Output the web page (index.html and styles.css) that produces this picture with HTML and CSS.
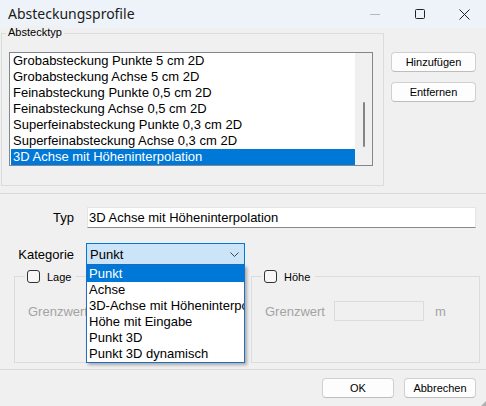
FILE: index.html
```html
<!DOCTYPE html>
<html lang="de">
<head>
<meta charset="utf-8">
<title>Absteckungsprofile</title>
<link rel="stylesheet" href="styles.css">
</head>
<body>
<div class="window">
  <header class="titlebar">
    <span class="title">Absteckungsprofile</span>
    <div class="controls">
      <span class="ctl"><svg width="10" height="10" viewBox="0 0 10 10"><line x1="0" y1="5.5" x2="10" y2="5.5" stroke="#b8b8b8" stroke-width="1"/></svg></span>
      <span class="ctl"><svg width="10" height="10" viewBox="0 0 10 10"><rect x="0.5" y="0.5" width="9" height="9" rx="1" fill="none" stroke="#222" stroke-width="1"/></svg></span>
      <span class="ctl"><svg width="11" height="11" viewBox="0 0 11 11"><path d="M0.5 0.5 L10.5 10.5 M10.5 0.5 L0.5 10.5" stroke="#222" stroke-width="1" fill="none"/></svg></span>
    </div>
  </header>

  <div class="top">
    <div class="group main-group">
      <span class="group-label">Abstecktyp</span>
      <div class="listbox">
        <ul class="items">
          <li>Grobabsteckung Punkte 5 cm 2D</li>
          <li>Grobabsteckung Achse 5 cm 2D</li>
          <li>Feinabsteckung Punkte 0,5 cm 2D</li>
          <li>Feinabsteckung Achse 0,5 cm 2D</li>
          <li>Superfeinabsteckung Punkte 0,3 cm 2D</li>
          <li>Superfeinabsteckung Achse 0,3 cm 2D</li>
          <li class="selected">3D Achse mit Höheninterpolation</li>
        </ul>
        <div class="scrollbar"><div class="thumb"></div></div>
      </div>
    </div>
    <div class="side-buttons">
      <button class="btn side-btn">Hinzufügen</button>
      <button class="btn side-btn">Entfernen</button>
    </div>
  </div>

  <div class="sep"></div>

  <div class="form">
    <span class="lbl">Typ</span>
    <div class="textbox">3D Achse mit Höheninterpolation</div>
    <span class="lbl">Kategorie</span>
    <div class="combo-wrap">
      <div class="combo">
        <span>Punkt</span>
        <svg class="chev" width="9" height="5" viewBox="0 0 9 5"><path d="M0.5 0.5 L4.5 4.5 L8.5 0.5" fill="none" stroke="#444" stroke-width="1"/></svg>
      </div>
      <ul class="dropdown">
        <li class="selected">Punkt</li>
        <li>Achse</li>
        <li>3D-Achse mit Höheninterpolation</li>
        <li>Höhe mit Eingabe</li>
        <li>Punkt 3D</li>
        <li>Punkt 3D dynamisch</li>
      </ul>
    </div>
  </div>

  <div class="options">
    <div class="group opt-group">
      <div class="opt-legend"><span class="cb"></span><span>Lage</span></div>
      <div class="limit-row">
        <span class="limit-lbl">Grenzwert</span>
        <span class="limit-input"></span>
        <span class="unit">m</span>
      </div>
    </div>
    <div class="group opt-group">
      <div class="opt-legend"><span class="cb"></span><span>Höhe</span></div>
      <div class="limit-row">
        <span class="limit-lbl">Grenzwert</span>
        <span class="limit-input"></span>
        <span class="unit">m</span>
      </div>
    </div>
  </div>

  <div class="sep footer-sep"></div>

  <div class="footer">
    <button class="btn foot-btn">OK</button>
    <button class="btn foot-btn">Abbrechen</button>
  </div>
  <span class="grip"></span>
</div>
</body>
</html>
```

FILE: styles.css
```css
* { box-sizing: border-box; }

html, body {
  margin: 0;
  padding: 0;
}

body {
  font-family: "Liberation Sans", Arial, sans-serif;
  font-size: 13px;
  color: #000;
  background: #f0f0f0;
}

.window {
  width: 486px;
  height: 406px;
  background: #f0f0f0;
  overflow: hidden;
  position: relative;
  display: flex;
  flex-direction: column;
}

/* title bar */
.titlebar {
  height: 28px;
  flex: none;
  background: #eef2f9;
  display: flex;
  align-items: center;
  padding-left: 8px;
}

.title {
  font-family: "Noto Sans", "Open Sans", sans-serif;
  font-size: 14px;
  color: #1a1a1a;
  margin-top: -1px;
}

.controls {
  margin-left: auto;
  margin-right: -1px;
  display: flex;
  height: 28px;
}

.ctl {
  width: 45px;
  height: 28px;
  display: flex;
  align-items: center;
  justify-content: center;
}

/* generic group box */
.group {
  border: 1px solid #dcdcdc;
}

/* top section */
.top {
  display: flex;
  align-items: flex-start;
  padding-top: 5px;
  flex: none;
}

.main-group {
  width: 383px;
  height: 153px;
  margin-left: 1px;
}

.group-label {
  display: block;
  width: max-content;
  font-size: 11px;
  line-height: 13px;
  margin: -8px 0 0 4px;
  padding: 0 2px;
  background: #f0f0f0;
}

.listbox {
  margin: 13px 0 0 7px;
  width: 364px;
  height: 114px;
  border: 1px solid #82878f;
  background: #fff;
  display: flex;
}

.items {
  list-style: none;
  margin: 0;
  padding: 0 0 0 1px;
  width: 345px;
}

.items li {
  height: 16px;
  line-height: 16px;
  padding-left: 2px;
  white-space: nowrap;
}

.items li.selected,
.dropdown li.selected {
  background: #0078d7;
  color: #fff;
}

.scrollbar {
  width: 17px;
  background: #f0f0f0;
  display: flex;
  flex-direction: column;
}

.thumb {
  width: 2px;
  height: 45px;
  margin: 49px 0 0 8px;
  background: #858585;
  border-radius: 1px;
}

.side-buttons {
  margin: 19px 0 0 7px;
  display: flex;
  flex-direction: column;
  gap: 10px;
}

.btn {
  font-family: "Liberation Sans", Arial, sans-serif;
  font-size: 11px;
  color: #000;
  height: 20px;
  padding: 0;
  background: #fdfdfd;
  border: 1px solid #d0d0d0;
  border-bottom-color: #bdbdbd;
  border-radius: 4px;
}

.side-btn {
  width: 85px;
}

/* separators */
.sep {
  height: 1px;
  background: #d9d9d9;
  margin-top: 7px;
  flex: none;
}

/* form */
.form {
  margin-top: 13px;
  display: grid;
  grid-template-columns: 74px auto;
  column-gap: 12px;
  row-gap: 15px;
  align-items: center;
  justify-items: start;
}

.lbl {
  justify-self: end;
  font-size: 13px;
}

.textbox {
  margin-left: 1px;
  width: 389px;
  height: 21px;
  background: #fff;
  border: 1px solid #e4e4e4;
  border-bottom-color: #8a8a8a;
  padding-left: 1px;
  line-height: 19px;
  white-space: nowrap;
}

.combo-wrap {
  position: relative;
  width: 159px;
}

.combo {
  width: 159px;
  height: 22px;
  border: 1px solid #0078d7;
  background: #cce4f7;
  display: flex;
  align-items: center;
  padding: 0 4px 0 3px;
}

.chev {
  margin-left: auto;
  margin-right: 1px;
}

.dropdown {
  position: absolute;
  left: 0;
  top: 22px;
  width: 159px;
  margin: 0;
  padding: 0;
  list-style: none;
  background: #fff;
  border: 1px solid #1c6fc4;
  overflow: hidden;
  box-shadow: 2px 2px 3px rgba(0, 0, 0, 0.3);
  z-index: 5;
}

.dropdown li {
  height: 16px;
  line-height: 16px;
  padding-left: 2px;
  white-space: nowrap;
}

/* option groups */
.options {
  margin-top: 11px;
  padding-left: 14px;
  display: flex;
  gap: 8px;
}

.opt-group {
  width: 229px;
  height: 87px;
}

.opt-legend {
  display: flex;
  align-items: center;
  gap: 7px;
  width: max-content;
  height: 13px;
  margin: -7px 0 0 10px;
  padding: 0 5px 0 2px;
  background: #f0f0f0;
  font-size: 11px;
}

.cb {
  width: 13px;
  height: 13px;
  border: 1px solid #333;
  border-radius: 3px;
  background: #f7f7f7;
}

.limit-row {
  margin-top: 18px;
  padding-left: 13px;
  display: flex;
  align-items: center;
  height: 20px;
  color: #a3a3a3;
}

.limit-lbl {
  width: 69px;
}

.limit-input {
  width: 90px;
  height: 20px;
  border: 1px solid #dcdcdc;
  background: #f0f0f0;
}

.unit {
  margin-left: 11px;
}

.footer-sep {
  margin-top: 6px;
}

.footer {
  padding-top: 8px;
  padding-right: 10px;
  display: flex;
  justify-content: flex-end;
  gap: 10px;
}

.foot-btn {
  width: 72px;
}

.grip {
  position: absolute;
  right: 0;
  bottom: 0;
  width: 0;
  height: 0;
  border-left: 5px solid transparent;
  border-bottom: 5px solid #b0b0b0;
}
```
